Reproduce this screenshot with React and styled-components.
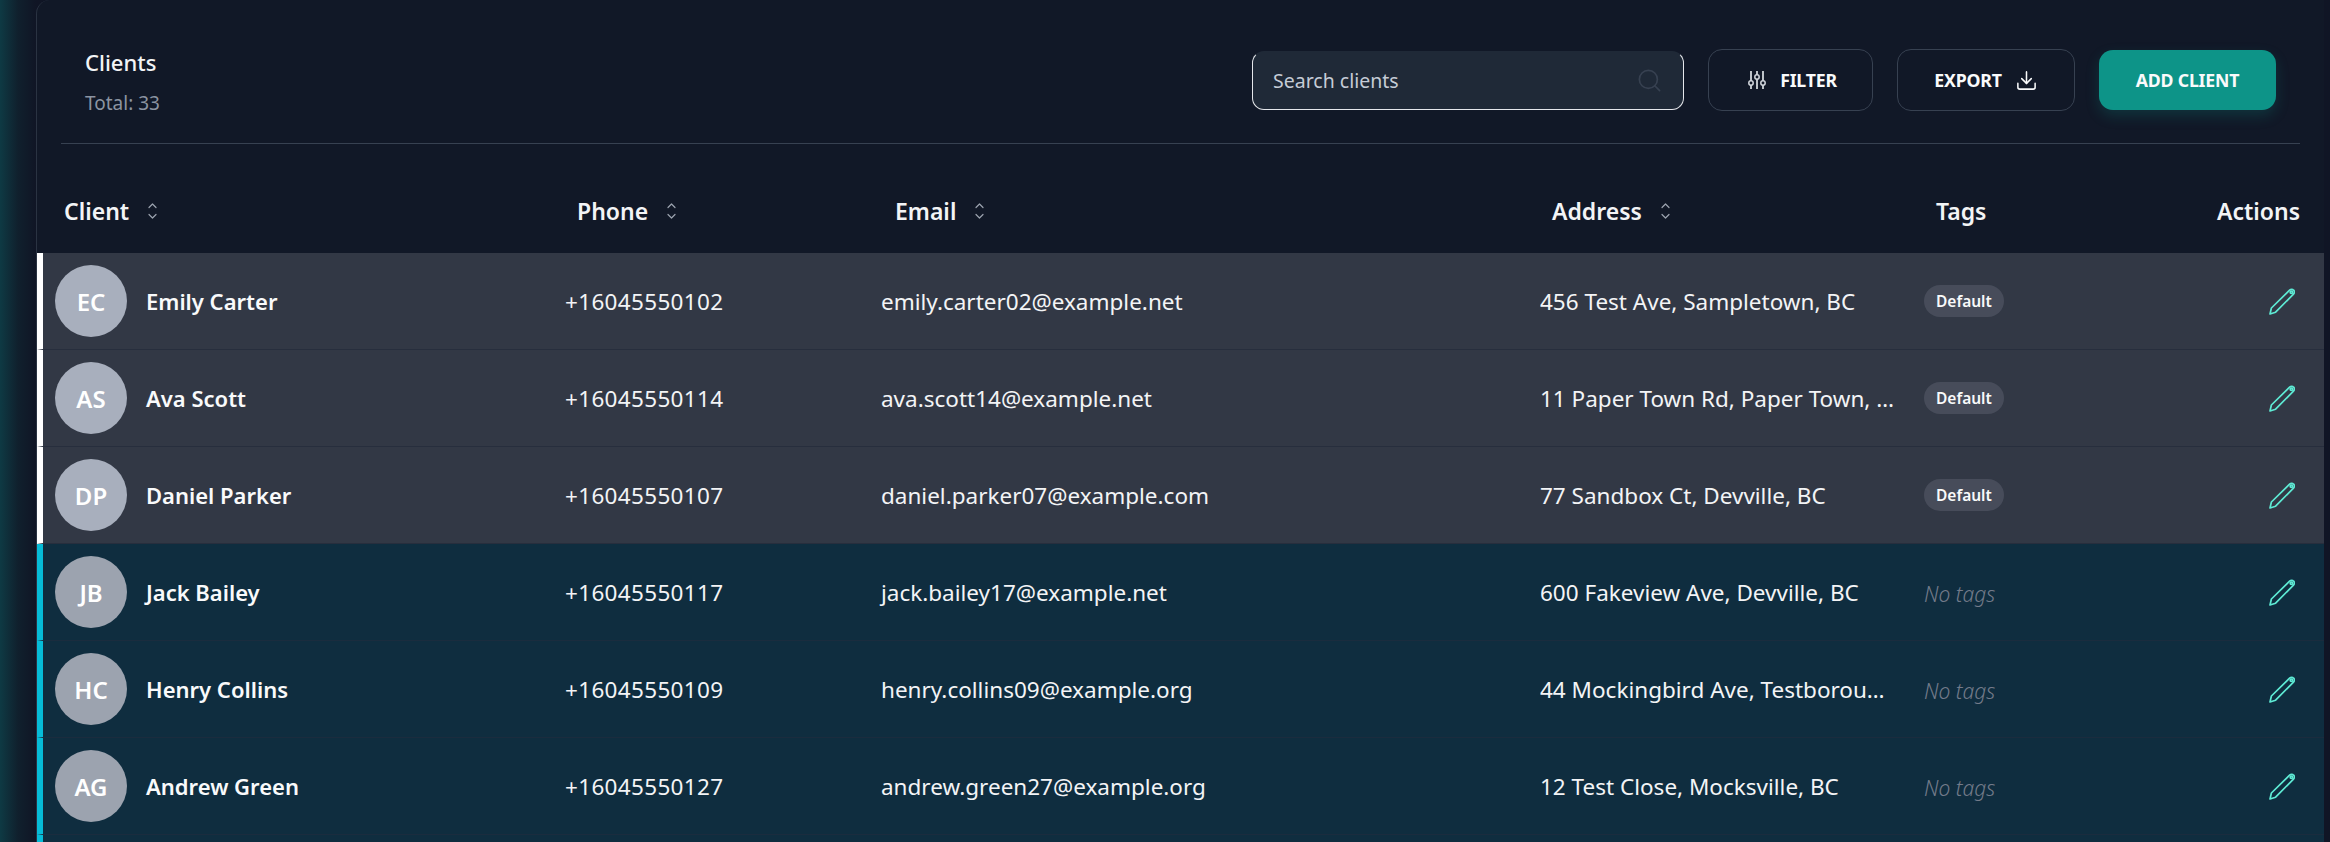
import React from 'react'
import styled, { createGlobalStyle } from 'styled-components'
import { Search, Download } from 'lucide-react'

const GlobalStyle = createGlobalStyle`
  html, body {
    margin: 0;
    height: 100%;
    overflow: hidden;
    background: #10141f;
    font-family: "Noto Sans", "Open Sans", sans-serif;
  }
  * { box-sizing: border-box; }
`

const COLS = '522px 316px 659px 384px 201px 1fr'

const Page = styled.div`
  height: 842px;
  padding: 0 6px 0 36px;
  background: linear-gradient(90deg, #0e3a44 0, #10202d 18px, #101525 36px);
  overflow: hidden;
`

const Card = styled.section`
  display: flex;
  flex-direction: column;
  height: 100%;
  background: #111827;
  border-left: 1px solid #2a3342;
  border-radius: 14px 0 0 0;
  overflow: hidden;
`

const TopBar = styled.header`
  display: flex;
  flex: none;
  justify-content: space-between;
  align-items: flex-start;
  height: 144px;
  margin: 0 24px;
  padding: 49px 0 0 24px;
  border-bottom: 1px solid #374151;
`

const TitleBlock = styled.div`
  margin-top: -2px;
`

const Title = styled.div`
  font-size: 22px;
  line-height: 30px;
  font-weight: 500;
  color: #f3f4f6;
`

const Subtitle = styled.div`
  margin-top: 11px;
  font-size: 19px;
  line-height: 30px;
  color: #8b93a1;
`

const Toolbar = styled.div`
  display: flex;
  align-items: center;
  gap: 24px;
  margin-right: 24px;
`

const SearchBox = styled.label`
  display: flex;
  align-items: center;
  width: 432px;
  height: 59px;
  padding: 0 20px 0 20px;
  margin-top: 1px;
  background: #1f2937;
  border: 1px solid #e5e7eb;
  border-top-color: transparent;
  border-radius: 12px;
  color: #374151;
`

const SearchInput = styled.input`
  flex: 1;
  min-width: 0;
  border: 0;
  outline: 0;
  padding: 0;
  background: transparent;
  font: inherit;
  font-size: 19.5px;
  color: #e5e7eb;

  &::placeholder {
    color: #c5ccd6;
    opacity: 1;
  }
`

const Button = styled.button`
  display: flex;
  align-items: center;
  justify-content: center;
  gap: ${(p) => p.$gap || 14}px;
  width: ${(p) => p.$width}px;
  height: ${(p) => (p.$primary ? 60 : 62)}px;
  padding: 0 0 0 ${(p) => p.$inset || 0}px;
  background: ${(p) => (p.$primary ? '#0d9488' : 'transparent')};
  border: ${(p) => (p.$primary ? '0' : '1px solid #374151')};
  border-radius: 14px;
  box-shadow: ${(p) => (p.$primary ? '0 6px 14px rgba(13, 148, 136, 0.22)' : 'none')};
  color: #f9fafb;
  font: inherit;
  font-size: 17.7px;
  font-weight: 700;
  letter-spacing: -0.2px;
  text-transform: uppercase;
`

const HeadRow = styled.div`
  display: grid;
  flex: none;
  grid-template-columns: ${COLS};
  align-items: center;
  height: 109px;
  padding: 24px 0 0 6px;
`

const HeadCell = styled.div`
  display: flex;
  align-items: center;
  justify-content: ${(p) => (p.$right ? 'flex-end' : 'flex-start')};
  gap: 19px;
  padding-left: ${(p) => p.$pad ?? 12}px;
  padding-right: ${(p) => (p.$right ? 24 : 0)}px;
  font-size: 23px;
  line-height: 30px;
  font-weight: 600;
  color: #f3f4f6;
`

const RowList = styled.div`
  flex: 1;
  background: linear-gradient(90deg, #06bcd8 6px, #0f2d3f 6px);
`

const Row = styled.div`
  display: grid;
  grid-template-columns: ${COLS};
  align-items: center;
  height: 97px;
  background: ${(p) => (p.$selected ? '#323845' : '#0f2d3f')};
  border-left: 6px solid ${(p) => (p.$selected ? '#ffffff' : '#06bcd8')};
  border-bottom: 1px solid ${(p) => (p.$selected ? '#272e3d' : '#1a2c3e')};
`

const ClientCell = styled.div`
  display: flex;
  align-items: center;
  gap: 19px;
  padding-left: 12px;
`

const Avatar = styled.div`
  display: flex;
  align-items: center;
  justify-content: center;
  width: 72px;
  height: 72px;
  border-radius: 50%;
  background: ${(p) => (p.$selected ? '#a8afbd' : '#9ca3af')};
  font-size: 24px;
  font-weight: 600;
  color: #ffffff;
`

const Name = styled.div`
  font-size: 22px;
  font-weight: 600;
  color: #f9fafb;
  white-space: nowrap;
`

const Cell = styled.div`
  font-size: 22.5px;
  color: #f3f4f6;
  white-space: nowrap;
  letter-spacing: ${(p) => (p.$digits ? '0.33px' : '0')};
`

const AddressCell = styled(Cell)`
  max-width: 358px;
  overflow: hidden;
  text-overflow: ellipsis;
`

const TagCell = styled.div`
  display: flex;
  align-items: center;
`

const Tag = styled.span`
  display: inline-flex;
  align-items: center;
  height: 32px;
  padding: 0 12px;
  border-radius: 16px;
  background: #474c5a;
  font-size: 15.5px;
  font-weight: 600;
  color: #f9fafb;
`

const NoTags = styled.span`
  padding-top: 3px;
  font-size: 21px;
  font-style: italic;
  font-weight: 300;
  color: #737b8a;
`

const ActionCell = styled.div`
  display: flex;
  justify-content: flex-end;
  padding-right: 29px;
`

const IconButton = styled.button`
  display: flex;
  padding: 0;
  border: 0;
  background: none;
`

const SortIcon = () => (
  <svg width="9" height="16" viewBox="0 0 9 16" fill="none" stroke="#9ca3af" strokeWidth="1.2" strokeLinecap="round" strokeLinejoin="round">
    <path d="M1 4.5 4.5 1 8 4.5" />
    <path d="M1 11.5 4.5 15 8 11.5" />
  </svg>
)

const SlidersIcon = () => (
  <svg width="18" height="20" viewBox="0 0 18 20" fill="none" stroke="#d1d5db">
    <path d="M3 1v18M9 1v18M15 1v18" strokeWidth="1.8" />
    <circle cx="3" cy="13" r="2.2" fill="#111827" strokeWidth="1.5" />
    <circle cx="9" cy="7" r="2.2" fill="#111827" strokeWidth="1.5" />
    <circle cx="15" cy="13" r="2.2" fill="#111827" strokeWidth="1.5" />
  </svg>
)

const PencilIcon = () => (
  <svg width="26" height="27" viewBox="0 0 26 27" fill="none" stroke="#5eead4" strokeWidth="1.7" strokeLinejoin="round">
    <path d="M1 26 2.4 20 20.6 2.2c1.2-1.2 3-1.2 4 0 1.1 1.1 1 2.8-.1 3.9L6.6 24.2 1 26Z" />
    <circle cx="22.4" cy="4.2" r="1.2" />
  </svg>
)

const clients = [
  { initials: 'EC', name: 'Emily Carter', phone: '+16045550102', email: 'emily.carter02@example.net', address: '456 Test Ave, Sampletown, BC', selected: true },
  { initials: 'AS', name: 'Ava Scott', phone: '+16045550114', email: 'ava.scott14@example.net', address: '11 Paper Town Rd, Paper Town, BC', selected: true },
  { initials: 'DP', name: 'Daniel Parker', phone: '+16045550107', email: 'daniel.parker07@example.com', address: '77 Sandbox Ct, Devville, BC', selected: true },
  { initials: 'JB', name: 'Jack Bailey', phone: '+16045550117', email: 'jack.bailey17@example.net', address: '600 Fakeview Ave, Devville, BC' },
  { initials: 'HC', name: 'Henry Collins', phone: '+16045550109', email: 'henry.collins09@example.org', address: '44 Mockingbird Ave, Testborough, BC' },
  { initials: 'AG', name: 'Andrew Green', phone: '+16045550127', email: 'andrew.green27@example.org', address: '12 Test Close, Mocksville, BC' },
]

const App = () => {
  return (
    <>
      <GlobalStyle />
      <Page>
        <Card>
          <TopBar>
            <TitleBlock>
              <Title>Clients</Title>
              <Subtitle>Total: 33</Subtitle>
            </TitleBlock>
            <Toolbar>
              <SearchBox>
                <SearchInput placeholder="Search clients" />
                <Search size={27} strokeWidth={1.5} />
              </SearchBox>
              <Button $width={165} $inset={4}>
                <SlidersIcon />
                Filter
              </Button>
              <Button $width={178} $gap={13}>
                Export
                <Download size={23} strokeWidth={1.6} />
              </Button>
              <Button $width={177} $primary>
                Add client
              </Button>
            </Toolbar>
          </TopBar>

          <HeadRow>
            <HeadCell $pad={21}>Client <SortIcon /></HeadCell>
            <HeadCell>Phone <SortIcon /></HeadCell>
            <HeadCell $pad={14}>Email <SortIcon /></HeadCell>
            <HeadCell>Address <SortIcon /></HeadCell>
            <HeadCell>Tags</HeadCell>
            <HeadCell $right $pad={0}>Actions</HeadCell>
          </HeadRow>

          <RowList>
            {clients.map((c) => (
              <Row key={c.email} $selected={c.selected}>
                <ClientCell>
                  <Avatar $selected={c.selected}>{c.initials}</Avatar>
                  <Name>{c.name}</Name>
                </ClientCell>
                <Cell $digits>{c.phone}</Cell>
                <Cell>{c.email}</Cell>
                <AddressCell>{c.address}</AddressCell>
                <TagCell>
                  {c.selected ? <Tag>Default</Tag> : <NoTags>No tags</NoTags>}
                </TagCell>
                <ActionCell>
                  <IconButton aria-label={`Edit ${c.name}`}>
                    <PencilIcon />
                  </IconButton>
                </ActionCell>
              </Row>
            ))}
          </RowList>
        </Card>
      </Page>
    </>
  )
}

export default App
